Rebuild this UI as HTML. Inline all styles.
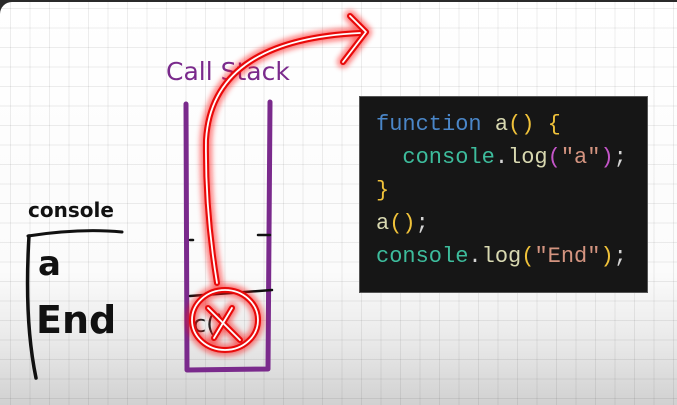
<!DOCTYPE html>
<html><head><meta charset="utf-8"><style>
html,body{margin:0;padding:0;width:677px;height:405px;overflow:hidden;background:#2a2a2a}
.page{position:absolute;left:0;top:2px;width:677px;height:403px;border-top-left-radius:12px;overflow:hidden;
background:linear-gradient(to bottom,#fff 0,#fbfbfb 270px,#e9e9e9 340px,#d0d0d0 405px);}
.grid{position:absolute;inset:0;background-image:linear-gradient(to right,rgba(0,0,0,.07) 1px,transparent 1px),linear-gradient(to bottom,rgba(0,0,0,.07) 1px,transparent 1px);background-size:19.5px 19.5px;background-position:10px 6px}
.code{position:absolute;left:359px;top:94px;width:289px;height:197px;background:#161616;border:1px solid #555;box-sizing:border-box;
font-family:"Liberation Mono",monospace;font-size:22px;line-height:33px;padding:11px 0 0 16px;color:#d8d8b0;white-space:pre}
.b{color:#4a86c8}.t{color:#3dbc9c}.y{color:#f0c23a}.p{color:#c455c8}.s{color:#d49480}.w{color:#d4d4d4}
svg{position:absolute;left:0;top:0}
</style></head><body><div class="page"><div class="grid"></div>
<div class="code"><span class="b">function</span> a<span class="y">()</span> <span class="y">{</span>
  <span class="t">console</span><span class="w">.</span>log<span class="p">(</span><span class="s">"a"</span><span class="p">)</span><span class="w">;</span>
<span class="y">}</span>
a<span class="y">()</span><span class="w">;</span>
<span class="t">console</span><span class="w">.</span>log<span class="y">(</span><span class="s">"End"</span><span class="y">)</span><span class="w">;</span></div>
</div>
<svg width="677" height="405" viewBox="0 0 677 405">
<defs><filter id="gl" x="-20%" y="-20%" width="140%" height="140%"><feGaussianBlur stdDeviation="3"/></filter></defs>
<g fill="none" stroke-linecap="round" stroke-linejoin="round">
<g stroke="#7a2a8c" stroke-width="5">
<path d="M186 104 L187 370 L268 369 L270 102"/>
</g>
<text x="166" y="80" font-family="DejaVu Sans, sans-serif" font-size="25" fill="#7a2a8c" stroke="none">Call Stack</text>
<g stroke="#111" stroke-width="2.5">
<path d="M190 240 L193 240"/><path d="M258 235 L270 235"/><path d="M190 296 L272 290"/>
</g>
<text x="28" y="217" font-family="DejaVu Sans, sans-serif" font-size="20" font-weight="bold" fill="#111" stroke="none">console</text>
<path d="M28 236 Q80 228 122 232" stroke="#111" stroke-width="3"/>
<path d="M29 236 Q24 320 36 378" stroke="#111" stroke-width="3.5"/>
<text x="38" y="275" font-family="DejaVu Sans, sans-serif" font-size="34" font-weight="bold" fill="#111" stroke="none">a</text>
<text x="36" y="333" font-family="DejaVu Sans, sans-serif" font-size="38" font-weight="bold" fill="#111" stroke="none">End</text>
<text x="193" y="332" font-family="DejaVu Sans, sans-serif" font-size="24" fill="#222" stroke="none">c()</text>
<g stroke="#ff1010" stroke-width="11" opacity=".6" filter="url(#gl)">
<path d="M217 283 Q205 210 206 140 Q212 40 360 33"/><path d="M350 16 L366 32 L343 62"/>
<ellipse cx="225" cy="320" rx="33" ry="30"/><path d="M208 308 L240 340"/><path d="M232 308 L214 338"/>
</g>
<g stroke="#e80a0a" stroke-width="6">
<path d="M217 283 Q205 210 206 140 Q212 40 360 33"/><path d="M350 16 L366 32 L343 62"/>
<ellipse cx="225" cy="320" rx="33" ry="30"/><path d="M208 308 L240 340"/><path d="M232 308 L214 338"/>
</g>
<g stroke="#fff" stroke-width="1.8">
<path d="M217 283 Q205 210 206 140 Q212 40 360 33"/><path d="M350 16 L366 32 L343 62"/>
<ellipse cx="225" cy="320" rx="33" ry="30"/><path d="M208 308 L240 340"/><path d="M232 308 L214 338"/>
</g>
</g>
</svg>
</body></html>
